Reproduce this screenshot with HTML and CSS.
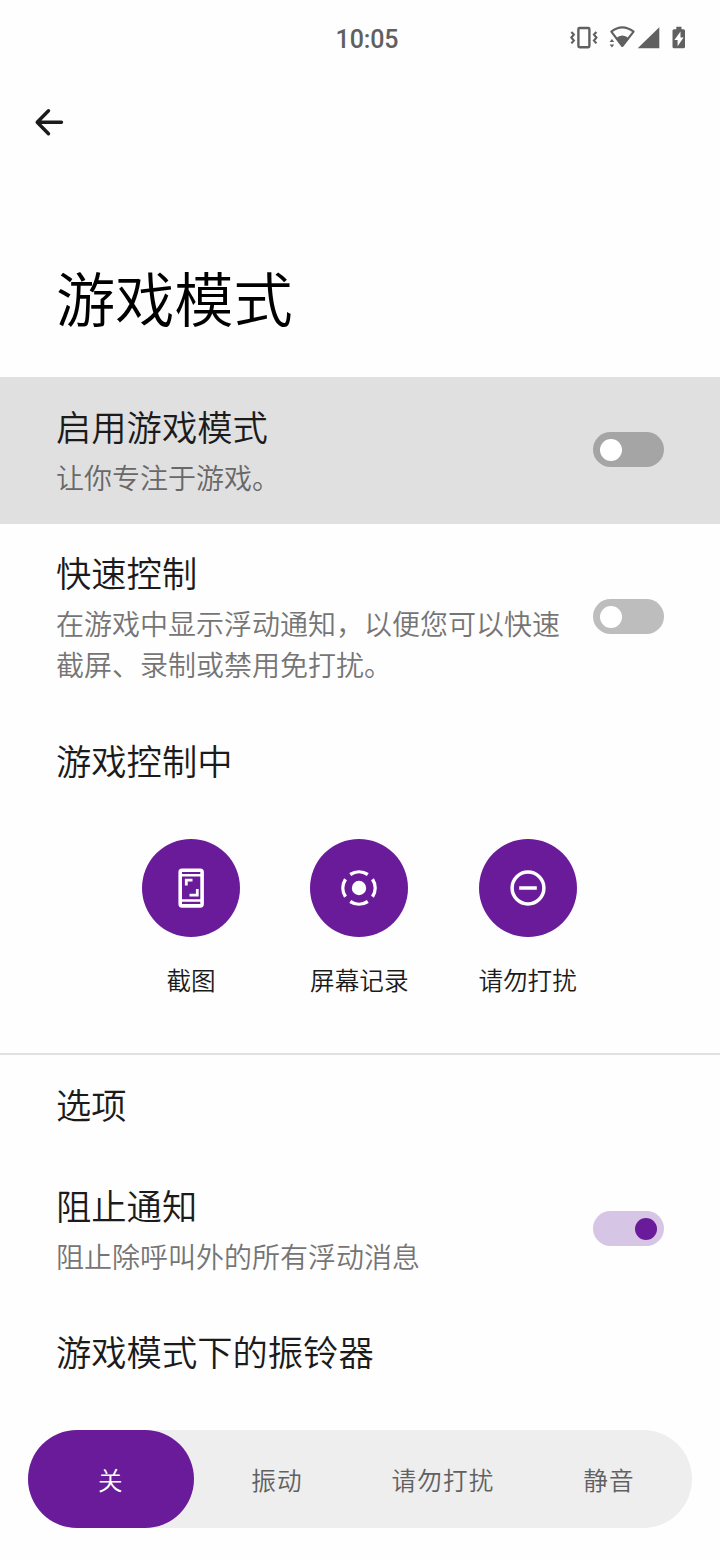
FILE: index.html
```html
<!DOCTYPE html>
<html lang="zh-CN">
<head>
<meta charset="utf-8">
<title>游戏模式</title>
<link rel="stylesheet" href="styles.css">
</head>
<body>
<header class="status">
  <span class="clock">10:05</span>
  <svg class="status-icons" width="120" height="28" viewBox="0 0 120 28">
    <g fill="none" stroke="#606060">
      <rect x="8.400" y="4" width="11" height="19.200" rx="1.200" stroke-width="2.400"/>
      <path d="M1.400 8l2.400 2.600-2.400 3 2.400 3-2.400 2.800M26.400 8l-2.400 2.600 2.400 3-2.400 3 2.400 2.800" stroke-width="2.200"/>
      <path d="M41.300 7.600Q52.200-1 63.600 7.600L52.300 22Z" stroke-width="2.100" stroke-linejoin="round"/>
    </g>
    <g fill="#606060">
      <path d="M45.700 14.400Q52.300 8.700 59 14.400L52.300 23Z"/>
      <path d="M39.600 17.900l2.300-2.800 2.300 2.800zM39.600 20.600h4.600l-2.300 2.800z"/>
      <path d="M67.700 24.200H89.300V3.200Z"/>
      <path d="M106.300 2.700h5.200v2.500h2q1.500 0 1.500 1.500V22.700q0 1.500-1.500 1.500h-9.500q-1.500 0-1.500-1.500V6.700q0-1.500 1.500-1.500h2.300z"/>
    </g>
    <path fill="#fff" d="M110.500 7.400L104.400 16h3.200v6.300l6-8.700h-3.100z"/>
  </svg>
</header>
<nav class="toolbar">
  <svg width="30" height="30" viewBox="0 0 30 30" fill="none" stroke="#1b1b1b" stroke-width="3.400" stroke-linecap="round" stroke-linejoin="round"><path d="M27.500 15.300H3.500M14.500 3.800L3.200 15.300L14.500 26.800"/></svg>
</nav>
<h1 class="title">游戏模式</h1>
<main>
  <section class="row row-pressed">
    <div class="copy"><h2 class="name">启用游戏模式</h2><p class="note">让你专注于游戏。</p></div>
    <span class="switch switch-pressed"></span>
  </section>
  <section class="row">
    <div class="copy"><h2 class="name">快速控制</h2><p class="note">在游戏中显示浮动通知，以便您可以快速截屏、录制或禁用免打扰。</p></div>
    <span class="switch"></span>
  </section>
  <section class="controls">
    <h2 class="name">游戏控制中</h2>
    <div class="tiles">
      <div class="tile">
        <div class="disc"><svg width="40" height="40" viewBox="0 0 40 40" fill="none" stroke="#fff">
          <rect x="9.200" y="2.200" width="21.900" height="35.700" rx="1.800" stroke-width="3.600"/>
          <path d="M9 7.200H31M9 32.600H31" stroke-width="2.500"/><path d="M15.300 17.500V12.200H21.500M18.500 27.200H26.300V21" stroke-width="2.800"/>
        </svg></div>
        <span class="label">截图</span>
      </div>
      <div class="tile">
        <div class="disc"><svg width="40" height="40" viewBox="0 0 40 40">
          <circle cx="20" cy="20" r="7.200" fill="#fff"/>
          <path d="M11.200 6.500A16.100 16.100 0 0 1 28.800 6.500M33.500 11.200A16.100 16.100 0 0 1 33.500 28.800M28.800 33.500A16.100 16.100 0 0 1 11.200 33.500M6.500 28.800A16.100 16.100 0 0 1 6.500 11.200" fill="none" stroke="#fff" stroke-width="3.400"/>
        </svg></div>
        <span class="label">屏幕记录</span>
      </div>
      <div class="tile">
        <div class="disc"><svg width="40" height="40" viewBox="0 0 40 40" fill="none" stroke="#fff" stroke-width="3.500">
          <circle cx="20" cy="20" r="15.900"/><path d="M11.200 20H28.800"/>
        </svg></div>
        <span class="label">请勿打扰</span>
      </div>
    </div>
  </section>
  <section class="options">
    <h2 class="name">选项</h2>
  </section>
  <section class="row">
    <div class="copy"><h2 class="name">阻止通知</h2><p class="note">阻止除呼叫外的所有浮动消息</p></div>
    <span class="switch switch-on"></span>
  </section>
  <section class="ringer">
    <h2 class="name">游戏模式下的振铃器</h2>
    <div class="segments">
      <span class="segment segment-active">关</span>
      <span class="segment">振动</span>
      <span class="segment">请勿打扰</span>
      <span class="segment">静音</span>
    </div>
  </section>
</main>
</body>
</html>
```
FILE: styles.css
```css
* { box-sizing: border-box; }
body {
  margin: 0;
  width: 720px;
  height: 1560px;
  overflow: hidden;
  background: #fefefe;
  color: #1b1b1b;
  font-family: "Noto Sans CJK SC", sans-serif;
  font-weight: 350;
}
h1, h2, p { margin: 0; font-weight: 350; }
svg { display: block; }
.status {
  display: grid;
  grid-template-columns: 1fr auto 1fr;
  align-items: center;
  height: 76px;
  padding: 0 30px 0 44px;
}
.clock {
  grid-column: 2;
  padding-top: 3px;
  font: 500 25px/30px Roboto, sans-serif;
  letter-spacing: -0.1px;
  color: #606060;
}
.status-icons { justify-self: end; }
.toolbar { height: 168px; padding: 31px 34px; }
.title {
  height: 133px;
  padding: 7px 56px 0;
  font-size: 59.2px;
  line-height: 90px;
  color: #000;
}
.row {
  display: flex;
  align-items: center;
  padding: 28.6px 56px 26px;
}
.row-pressed { background: #e0e0e0; }
.copy { flex: 1; }
.name { font-size: 35.3px; line-height: 40px; }
.note {
  width: 508px;
  margin-top: 11px;
  font-size: 28px;
  line-height: 41px;
  color: #757575;
}
.row-pressed .note { color: #686868; }
.switch {
  flex: none;
  width: 71px;
  height: 35px;
  margin: 0 0 4px -71px;
  padding: 6.5px 7px;
  border-radius: 18px;
  background: #bdbdbd;
}
.switch::before {
  content: "";
  display: block;
  width: 22px;
  height: 22px;
  border-radius: 50%;
  background: #fff;
}
.switch-pressed { background: #a5a5a5; }
.switch-on { background: #d7c5e6; }
.switch-on::before { margin-left: auto; background: #6a1b9a; }
.controls {
  height: 344px;
  padding-top: 28.6px;
  border-bottom: 2px solid #e0e0e0;
}
.controls .name, .options .name, .ringer .name { padding: 0 56px; }
.tiles {
  display: flex;
  justify-content: center;
  gap: 70px;
  margin-top: 59.4px;
  padding-right: 1.4px;
}
.tile { display: flex; flex-direction: column; align-items: center; width: 98.3px; }
.disc {
  display: grid;
  place-items: center;
  width: 98px;
  height: 98px;
  border-radius: 50%;
  background: #6a1b9a;
}
.label { margin-top: 24px; font-size: 24.6px; line-height: 36px; white-space: nowrap; }
.options { height: 101px; padding-top: 28.6px; }
.ringer { padding-top: 28.6px; }
.segments {
  display: flex;
  height: 98px;
  margin: 59px 28px 0;
  border-radius: 49px;
  background: #eee;
}
.segment {
  flex: 1;
  font-size: 24.6px;
  line-height: 98px;
  letter-spacing: 1.2px;
  text-align: center;
  color: #606060;
}
.segment-active { border-radius: 49px; background: #6a1b9a; color: #fff; }
```
